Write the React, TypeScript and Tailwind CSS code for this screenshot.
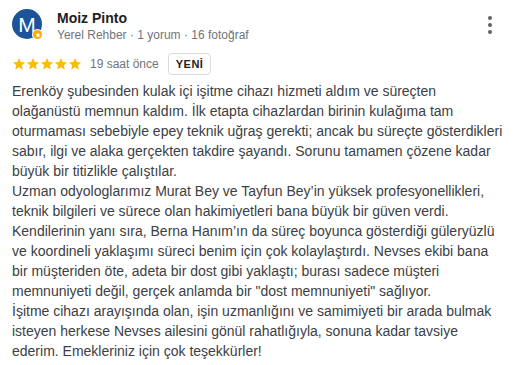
import React from "react";

const lines = [
  "Erenköy şubesinden kulak içi işitme cihazı hizmeti aldım ve süreçten",
  "olağanüstü memnun kaldım. İlk etapta cihazlardan birinin kulağıma tam",
  "oturmaması sebebiyle epey teknik uğraş gerekti; ancak bu süreçte gösterdikleri",
  "sabır, ilgi ve alaka gerçekten takdire şayandı. Sorunu tamamen çözene kadar",
  "büyük bir titizlikle çalıştılar.",
  "Uzman odyologlarımız Murat Bey ve Tayfun Bey’in yüksek profesyonellikleri,",
  "teknik bilgileri ve sürece olan hakimiyetleri bana büyük bir güven verdi.",
  "Kendilerinin yanı sıra, Berna Hanım’ın da süreç boyunca gösterdiği güleryüzlü",
  "ve koordineli yaklaşımı süreci benim için çok kolaylaştırdı. Nevses ekibi bana",
  "bir müşteriden öte, adeta bir dost gibi yaklaştı; burası sadece müşteri",
  "memnuniyeti değil, gerçek anlamda bir \"dost memnuniyeti\" sağlıyor.",
  "İşitme cihazı arayışında olan, işin uzmanlığını ve samimiyeti bir arada bulmak",
  "isteyen herkese Nevses ailesini gönül rahatlığıyla, sonuna kadar tavsiye",
  "ederim. Emekleriniz için çok teşekkürler!",
];

function Star() {
  return (
    <svg viewBox="0 0 24 24" className="h-[14px] w-[14px]" fill="#fbbc04">
      <path d="M12 1.8l3 6.9 7.4.6-5.6 4.9 1.7 7.3L12 17.6l-6.5 3.9 1.7-7.3-5.6-4.9 7.4-.6z" />
    </svg>
  );
}

export default function App() {
  return (
    <div className="min-h-screen w-full bg-white font-['Liberation_Sans',Arial,sans-serif]">
      <div className="flex flex-col pl-3 pr-[4px] pt-[9px]">
        {/* header */}
        <div className="flex items-start">
          <div className="relative h-[30px] w-[30px] shrink-0">
            <div className="flex h-[30px] w-[30px] items-center justify-center rounded-full bg-[#1b5499] pt-[1px] text-[21px] text-white">
              M
            </div>
            <div className="absolute -bottom-[1px] -right-[1px] flex h-[11px] w-[11px] items-center justify-center rounded-full bg-white">
              <div className="flex h-[9px] w-[9px] items-center justify-center rounded-full bg-[#f9ab00]">
                <svg viewBox="0 0 24 24" className="h-[6px] w-[6px]" fill="#fff">
                  <path d="M12 1.8l3 6.9 7.4.6-5.6 4.9 1.7 7.3L12 17.6l-6.5 3.9 1.7-7.3-5.6-4.9 7.4-.6z" />
                </svg>
              </div>
            </div>
          </div>
          <div className="ml-[15px] flex flex-col">
            <div className="text-[14px] font-bold leading-[18px] text-[#202124]">Moiz Pinto</div>
            <div className="text-[12px] leading-[16px] text-[#70757a]">Yerel Rehber · 1 yorum · 16 fotoğraf</div>
          </div>
          <div className="ml-auto mr-[17px] mt-[7px] flex flex-col gap-[3px]">
            <span className="h-[4px] w-[4px] rounded-full bg-[#5f6368]" />
            <span className="h-[4px] w-[4px] rounded-full bg-[#5f6368]" />
            <span className="h-[4px] w-[4px] rounded-full bg-[#5f6368]" />
          </div>
        </div>

        {/* rating row */}
        <div className="mt-[10px] flex items-center">
          <div className="flex">
            <Star />
            <Star />
            <Star />
            <Star />
            <Star />
          </div>
          <span className="ml-[8px] text-[12px] text-[#70757a]">19 saat önce</span>
          <span className="ml-[9px] flex h-[22px] items-center rounded-[4px] border border-[#dadce0] px-[7px] text-[11px] font-bold tracking-[0.5px] text-[#202124]">
            YENİ
          </span>
        </div>

        {/* body */}
        <div className="mt-[6px] text-[14px] leading-[20px] text-[#3c4043]">
          {lines.map((l, i) => (
            <div key={i} className="whitespace-nowrap">
              {l}
            </div>
          ))}
        </div>
      </div>
    </div>
  );
}
